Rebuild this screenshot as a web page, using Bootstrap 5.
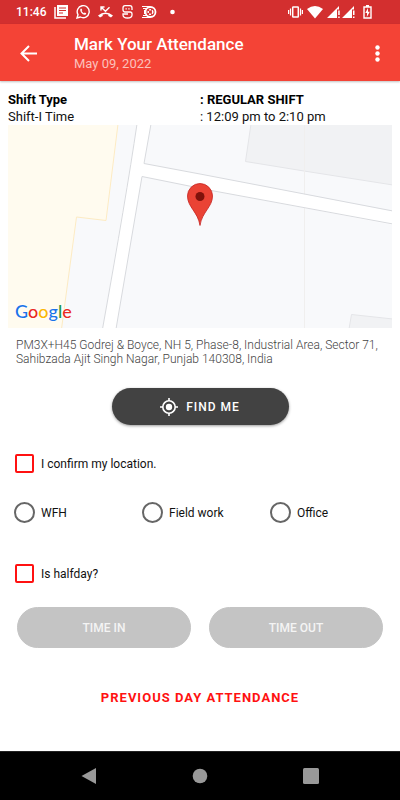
<!DOCTYPE html>
<html lang="en">
<head>
<meta charset="utf-8">
<meta name="viewport" content="width=device-width, initial-scale=1">
<title>Mark Your Attendance</title>
<link href="https://cdn.jsdelivr.net/npm/bootstrap@5.3.0/dist/css/bootstrap.min.css" rel="stylesheet">
<style>
  body { font-family: Roboto, "Liberation Sans", sans-serif; font-size: 13px; color: #111; background: #fff; }
  svg { display: block; flex: none; }
  .status-bar { height: 24px; background: #d32f2f; color: #fff; font-size: 12px; font-weight: 500; line-height: 24px; padding: 0 28px 0 16px; }
  .app-bar { height: 57px; background: #f44336; color: #fff; padding: 2px 14px 0 20px; box-shadow: 0 1px 2px rgba(0,0,0,.25); }
  .app-title { font-size: 17px; line-height: 20px; font-weight: 500; margin: 0; }
  .app-date { font-size: 13px; line-height: 20px; color: #fbc1bc; }
  .icon-btn { border: 0; background: none; padding: 0; color: #fff; }
  .page-main { padding: 10px 8px 0; }
  .shift-info { line-height: 17px; margin: 0; }
  .shift-info > * { margin: 0; font-weight: 400; }
  .shift-info .strong-line { font-weight: 700; color: #000; }
  .map-view { background: #f8f9fb; height: 203px; overflow: hidden; }
  .map-brand { left: 7px; bottom: 6px; font-family: Lato, sans-serif; font-size: 18px; line-height: 22px; font-weight: 500; text-shadow: 0 0 2px #fff, 0 0 2px #fff; }
  .g-blue { color: #1a73e8; } .g-red { color: #ea2a20; } .g-yellow { color: #fbb605; } .g-green { color: #1e9644; }
  .address { font-size: 12px; line-height: 14px; font-weight: 300; color: #444; padding: 10px 8px 0; margin: 0 0 22px; }
  .find-btn { width: 177px; height: 37px; background: #424242; color: #fff; font-size: 12px; font-weight: 500; letter-spacing: 1px; box-shadow: 0 1px 3px rgba(0,0,0,.4); --bs-btn-hover-bg: #555; --bs-btn-hover-color: #fff; }
  .choice { font-size: 12px; line-height: 20px; min-height: 21px; padding-left: 6px; gap: 6px; }
  .choice .form-check-input { margin: 0; flex: none; background-color: #fff; }
  .choice .form-check-input[type=checkbox] { width: 19px; height: 19px; margin: 0 1px; border: 2px solid #f11; border-radius: 2px; }
  .choice .form-check-input[type=radio] { width: 21px; height: 21px; border: 2px solid #666; }
  .choice .form-check-input:checked { background-color: #f44336; }
  .confirm-row { margin-top: 28px; }
  .mode-row { margin-top: 28px; }
  .half-row { margin-top: 40px; }
  .time-row { margin-top: 23px; }
  .time-row > div { padding: 0 9px; }
  .time-btn { height: 41px; font-size: 12px; font-weight: 500; --bs-btn-disabled-bg: #c4c4c4; --bs-btn-disabled-border-color: #c4c4c4; --bs-btn-disabled-color: #f4f4f4; --bs-btn-disabled-opacity: 1; }
  .prev-link { color: #f11; font-size: 13px; line-height: 20px; font-weight: 700; letter-spacing: 1px; margin-top: 40px; }
  .system-nav { height: 49px; background: #000; border-top: 1px solid #222; padding: 0 80px; }
</style>
<script src="https://cdn.jsdelivr.net/npm/bootstrap@5.3.0/dist/js/bootstrap.bundle.min.js"></script>
</head>
<body class="d-flex flex-column min-vh-100">
<div class="status-bar d-flex align-items-center">
  <span class="me-2">11:46</span>
  <svg width="14" height="14" viewBox="0 0 14 14" fill="none" stroke="#fff"><path d="M1 2v11h11" stroke-width="1.5"/><path d="M3 0h11v11H3z" fill="#fff" stroke="none"/><path d="M5 3h7M5 5.500h7M5 8h4" stroke="#d32f2f" stroke-width="1.2"/></svg>
  <svg class="ms-2" width="14" height="14" viewBox="0 0 14 14"><path d="M1 13l1-3.300A6 6 0 1 1 4.400 12z" fill="none" stroke="#fff" stroke-width="1.400"/><path d="M4.400 4q.8-1 1.300 0l.5 1.200-.6.800q.8 1.500 2.300 2.200l.8-.8 1.500.8q.2 1.200-1.200 1.500C6.500 10 3.600 6.500 4.400 4z" fill="#fff"/></svg>
  <svg class="ms-2" width="15" height="14" viewBox="0 0 15 14"><path d="M3 5.500V2h3.500M3.200 2.200l4.300 4 4-4" fill="none" stroke="#fff" stroke-width="1.400"/><path d="M0 10.500q7.500-6 15 0l-2 2-2.700-1.600V9.400q-2.800-1-5.600 0v1.500L2 12.500z" fill="#fff"/></svg>
  <svg class="mx-2" width="13" height="14" viewBox="0 0 13 14" fill="none" stroke="#fff" stroke-width="1.300"><path d="M11 5V3q0-2.300-2-2.300H4Q2 .7 2 3v1.500Q2 7 4 7h5q2 0 2 2v1q0 3-4.500 3T2 10V9h5M4.500 3.800h1.300M7.300 3.800h1.300"/></svg>
  <svg width="15" height="14" viewBox="0 0 15 14"><path d="M0 1h8v1H0zM1 3h4v1H1zM1 10h4v1H1zM0 12h8v1H0zM2 5h2v4H2z" fill="#fff"/><circle cx="8.500" cy="7" r="5" fill="#d32f2f" stroke="#fff" stroke-width="1.800"/><circle cx="8.500" cy="7" r="2.300" fill="none" stroke="#fff" stroke-width="1.500" stroke-dasharray="1.800 1"/></svg>
  <svg class="ms-2" width="14" height="14" viewBox="0 0 14 14"><circle cx="7.500" cy="7" r="2.300" fill="#fff"/></svg>
  <svg class="ms-auto" width="15" height="14" viewBox="0 0 15 14" fill="none" stroke="#fff"><rect x="4.700" y="2" width="5.600" height="10" rx=".6" stroke-width="1.500"/><path d="M2.500 3.500v7M12.500 3.500v7M.6 5v4M14.400 5v4" stroke-width="1.200"/></svg>
  <svg class="ms-1" width="16" height="14" viewBox="0 0 16 14"><path d="M0 4Q8-2.200 16 4L8 13.500z" fill="#fff"/></svg>
  <svg class="ms-1" width="14" height="14" viewBox="0 0 14 14" fill="#fff"><path d="M0 13L12 1v3.500h-2V13zM11.200 5.500h1.500v4.500h-1.500zM11.200 11.500h1.500V13h-1.500z"/></svg>
  <svg width="14" height="14" viewBox="0 0 14 14" fill="#fff"><path d="M1 13L13 1v3.500h-2V13zM12 5.500h1.500v4.500H12zM12 11.500h1.500V13H12z"/></svg>
  <svg class="ms-2" width="9" height="14" viewBox="0 0 9 14"><path d="M1 2h7v11H1z" fill="none" stroke="#fff" stroke-width="1.400"/><path d="M3 0h3v2H3zM5 3L2.300 8h1.800L3.800 12 6.800 6.700H5z" fill="#fff"/></svg>
</div>
<header class="app-bar d-flex align-items-center">
  <button class="icon-btn" type="button" aria-label="Back"><svg width="18" height="18" viewBox="0 0 18 18" fill="none" stroke="#fff" stroke-width="2"><path d="M17 8.500H2M9 1L1.500 8.500 9 16"/></svg></button>
  <div class="flex-grow-1 ps-4 ms-2">
    <h1 class="app-title ms-1">Mark Your Attendance</h1>
    <div class="app-date ms-1">May 09, 2022</div>
  </div>
  <button class="icon-btn" type="button" aria-label="More options"><svg width="18" height="18" viewBox="0 0 18 18" fill="#fff"><circle cx="9.500" cy="2.500" r="2.200"/><circle cx="9.500" cy="8.500" r="2.200"/><circle cx="9.500" cy="14.500" r="2.200"/></svg></button>
</header>
<main class="page-main flex-grow-1">
  <dl class="shift-info row g-0">
    <dt class="col-6 strong-line">Shift Type</dt><dd class="col-6 strong-line">: REGULAR SHIFT</dd>
    <dt class="col-6">Shift-I Time</dt><dd class="col-6">: 12:09 pm to 2:10 pm</dd>
  </dl>
  <div class="map-view position-relative">
    <svg width="100%" height="100%" viewBox="0 0 384 203" preserveAspectRatio="xMidYMid slice" role="img" aria-label="Map with location pin">
      <path d="M0 0H110L98 95.500 68.500 92 53.500 203H0z" fill="#fffbef"/>
      <path d="M110-1L98 95.500 68.500 92 53.500 204" fill="none" stroke="#fdebc3"/>
      <path d="M243-1L237.500 36.500 296 46 385 60V-1z" fill="#f1f2f4" stroke="#e4e5e8"/>
      <path d="M341 204l2.500-14.500L385 194v10z" fill="#f1f2f4" stroke="#e4e5e8"/>
      <path d="M296.500 0v203" stroke="#f0efee"/>
      <path d="M129-1L94.500 204H108L134 51.500 206 66l179 34V86.500L192 49 136 38.500 143-1z" fill="#fff"/>
      <path d="M129-1Q118 73 94.500 204M143-1L136 38.500 192 49 385 86M108 204L134 51.500 206 66l179 33" fill="none" stroke="#d8dade"/>
      <path d="M192 100.500C190 87 179.500 82 179.500 71a12.500 12.500 0 0 1 25 0C204.500 82 194 87 192 100.500z" fill="#ea4335" stroke="#c5221f" stroke-width=".8"/>
      <circle cx="192" cy="71.500" r="4.500" fill="#7e120b"/>
    </svg>
    <div class="map-brand position-absolute"><span class="g-blue">G</span><span class="g-red">o</span><span class="g-yellow">o</span><span class="g-blue">g</span><span class="g-green">l</span><span class="g-red">e</span></div>
  </div>
  <p class="address">PM3X+H45 Godrej &amp; Boyce, NH 5, Phase-8, Industrial Area, Sector 71, Sahibzada Ajit Singh Nagar, Punjab 140308, India</p>
  <button class="find-btn btn rounded-pill d-flex align-items-center justify-content-center mx-auto p-0 border-0" type="button">
    <svg class="me-2" width="18" height="18" viewBox="0 0 18 18" fill="none" stroke="#fff"><circle cx="9" cy="9" r="6.200" stroke-width="1.600"/><circle cx="9" cy="9" r="3.200" fill="#fff" stroke="none"/><path d="M9 0v3M9 15v3M0 9h3M15 9h3" stroke-width="1.600"/></svg>
    <span>FIND ME</span>
  </button>
  <div class="choice confirm-row d-flex align-items-center"><input class="form-check-input" type="checkbox" id="confirm"><label for="confirm">I confirm my location.</label></div>
  <div class="mode-row row g-0" role="radiogroup" aria-label="Work mode">
    <div class="col-4 choice d-flex align-items-center"><input class="form-check-input" type="radio" name="mode" id="wfh"><label for="wfh">WFH</label></div>
    <div class="col-4 choice d-flex align-items-center"><input class="form-check-input" type="radio" name="mode" id="field"><label for="field">Field work</label></div>
    <div class="col-4 choice d-flex align-items-center"><input class="form-check-input" type="radio" name="mode" id="office"><label for="office">Office</label></div>
  </div>
  <div class="choice half-row d-flex align-items-center"><input class="form-check-input" type="checkbox" id="halfday"><label for="halfday">Is halfday?</label></div>
  <div class="time-row row g-0">
    <div class="col-6"><button class="time-btn btn rounded-pill w-100 p-0" type="button" disabled>TIME IN</button></div>
    <div class="col-6"><button class="time-btn btn rounded-pill w-100 p-0" type="button" disabled>TIME OUT</button></div>
  </div>
  <div class="text-center"><a class="prev-link d-inline-block text-decoration-none" href="#">PREVIOUS DAY ATTENDANCE</a></div>
</main>
<nav class="system-nav d-flex align-items-center justify-content-between" aria-label="System">
  <button class="icon-btn" type="button" aria-label="Back"><svg width="18" height="18" viewBox="0 0 18 18"><path d="M1.500 9L16 1v16z" fill="#999"/></svg></button>
  <button class="icon-btn" type="button" aria-label="Home"><svg width="18" height="18" viewBox="0 0 18 18"><circle cx="9" cy="9" r="7.300" fill="#999"/></svg></button>
  <button class="icon-btn" type="button" aria-label="Recent apps"><svg width="18" height="18" viewBox="0 0 18 18"><rect x="1" y="1" width="16" height="16" rx="1.500" fill="#999"/></svg></button>
</nav>
</body>
</html>
